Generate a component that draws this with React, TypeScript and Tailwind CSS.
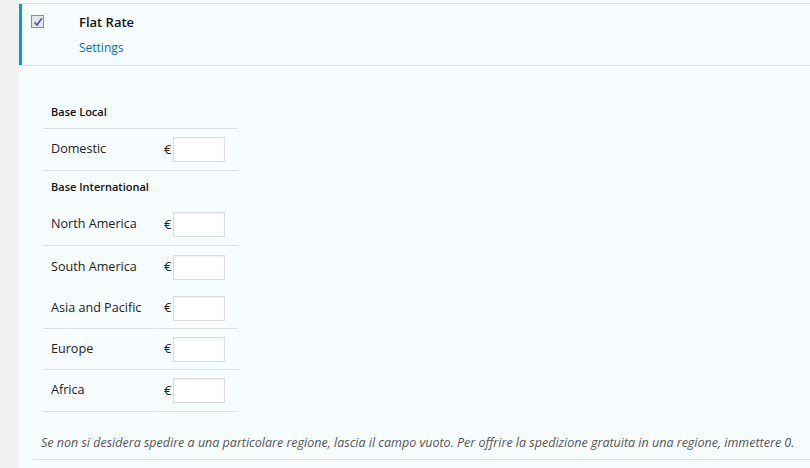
const rows = [
  { type: "head", label: "Base Local", line: true, h: "h-[33px]" },
  { type: "row", label: "Domestic", line: true, h: "h-[42px]" },
  { type: "head", label: "Base International", line: false, h: "h-[33px]" },
  { type: "row", label: "North America", line: true, h: "h-[42px]" },
  { type: "row", label: "South America", line: false, h: "h-[42px]" },
  { type: "row", label: "Asia and Pacific", line: true, h: "h-[41px]" },
  { type: "row", label: "Europe", line: true, h: "h-[41px]" },
  { type: "row", label: "Africa", line: true, h: "h-[42px]" },
];

const PriceRow = ({ label, line, h }: { label: string; line: boolean; h: string }) => (
  <div className={`flex ${h}`}>
    <div
      className={`w-[112px] flex items-center pl-2 text-[12.6px] text-[#222] ${
        line ? "border-b border-[#e1e1e1]" : ""
      }`}
    >
      {label}
    </div>
    <div
      className={`ml-px w-[82px] flex items-center pl-2 text-[13px] text-[#222] ${
        line ? "border-b border-[#e1e1e1]" : ""
      }`}
    >
      <span className="w-[9px]">€</span>
      <div className="w-[52px] h-[25px] bg-white border border-[#ddd] shadow-[inset_0_1px_2px_rgba(0,0,0,0.07)]" />
    </div>
  </div>
);

export default function App() {
  return (
    <div className="w-[810px] h-[468px] flex bg-[#f1f1f1] overflow-hidden font-['Open_Sans',sans-serif]">
      <div className="w-[19px] shrink-0" />
      <div className="flex-1 bg-[#f7fcfe] pt-[3px]">
        <div className="h-[63px] flex border-t border-b border-[#e1e1e1]">
          <div className="w-[3px] bg-[#00a0d2]" />
          <div className="pl-[9px] pt-[11px]">
            <div className="w-[13px] h-[13px] border border-[#8c8f94] bg-[#e4e6ea] flex items-center justify-center">
              <svg width="10" height="10" viewBox="0 0 10 10">
                <path d="M1.5 5.2 L4 8 L8.8 1.2" fill="none" stroke="#3858b8" strokeWidth="1.6" />
              </svg>
            </div>
          </div>
          <div className="pl-[35px] pt-[8px] flex flex-col">
            <span className="text-[13px] font-semibold text-[#111] leading-[20px]">Flat Rate</span>
            <span className="mt-[7px] text-[12px] text-[#0073aa] leading-[18px]">Settings</span>
          </div>
        </div>

        <div className="pl-[24px] pt-[30px]">
          {rows.map((r) =>
            r.type === "head" ? (
              <div
                key={r.label}
                className={`w-[195px] flex items-center pl-2 text-[11px] font-semibold text-[#111] ${r.h} ${
                  r.line ? "border-b border-[#e1e1e1]" : ""
                }`}
              >
                {r.label}
              </div>
            ) : (
              <PriceRow key={r.label} label={r.label} line={r.line} h={r.h} />
            )
          )}
        </div>

        <div className="ml-[14px] mt-[22px] h-[26px] border-b border-[#e1e1e1] pl-[8px] text-[12.5px] leading-[18px] italic text-[#555] whitespace-nowrap">
          Se non si desidera spedire a una particolare regione, lascia il campo vuoto. Per offrire la spedizione gratuita in una regione, immettere 0.
        </div>
      </div>
    </div>
  );
}
